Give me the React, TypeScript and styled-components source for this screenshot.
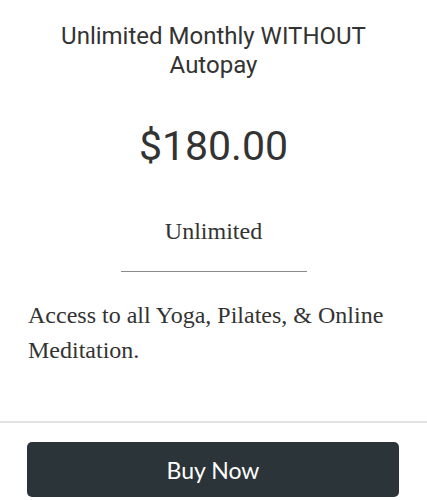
import React from 'react';
import styled, { createGlobalStyle } from 'styled-components';

const GlobalStyle = createGlobalStyle`
  html, body {
    margin: 0;
    padding: 0;
    background: #ffffff;
  }
`;

const Card = styled.div`
  width: 427px;
  display: flex;
  flex-direction: column;
  background: #fff;
`;

const CardBody = styled.div`
  padding: 22px 28px 53px;
  display: flex;
  flex-direction: column;
  align-items: center;
`;

const PlanTitle = styled.h2`
  margin: 0;
  width: 320px;
  font-family: Roboto, "Liberation Sans", sans-serif;
  font-weight: 400;
  font-size: 24px;
  line-height: 1.2;
  color: #333;
  text-align: center;
`;

const Price = styled.div`
  margin-top: 42px;
  font-family: Roboto, "Liberation Sans", sans-serif;
  font-size: 41px;
  line-height: 48px;
  color: #333;
`;

const PlanType = styled.div`
  margin-top: 47px;
  font-family: "Liberation Serif", serif;
  font-size: 24px;
  line-height: 1.2;
  color: #333;
`;

const Rule = styled.hr`
  margin: 26px 0 0;
  width: 186px;
  border: 0;
  border-top: 1px solid #8a8a8a;
`;

const Description = styled.p`
  margin: 26px 0 0;
  align-self: stretch;
  font-family: "Liberation Serif", serif;
  font-size: 24px;
  line-height: 35px;
  color: #333;
`;

const CardFooter = styled.div`
  border-top: 2px solid #e2e2e2;
  padding: 19px 28px 4px 27px;
`;

const BuyButton = styled.button`
  display: block;
  width: 100%;
  height: 55px;
  border: 0;
  border-radius: 5px;
  background: #2b3439;
  color: #fff;
  font-family: Lato, "Liberation Sans", sans-serif;
  font-size: 23px;
  cursor: pointer;
`;

export default function App() {
  return (
    <>
      <GlobalStyle />
      <Card>
        <CardBody>
          <PlanTitle>Unlimited Monthly WITHOUT Autopay</PlanTitle>
          <Price>$180.00</Price>
          <PlanType>Unlimited</PlanType>
          <Rule />
          <Description>Access to all Yoga, Pilates, &amp; Online Meditation.</Description>
        </CardBody>
        <CardFooter>
          <BuyButton>Buy Now</BuyButton>
        </CardFooter>
      </Card>
    </>
  );
}
